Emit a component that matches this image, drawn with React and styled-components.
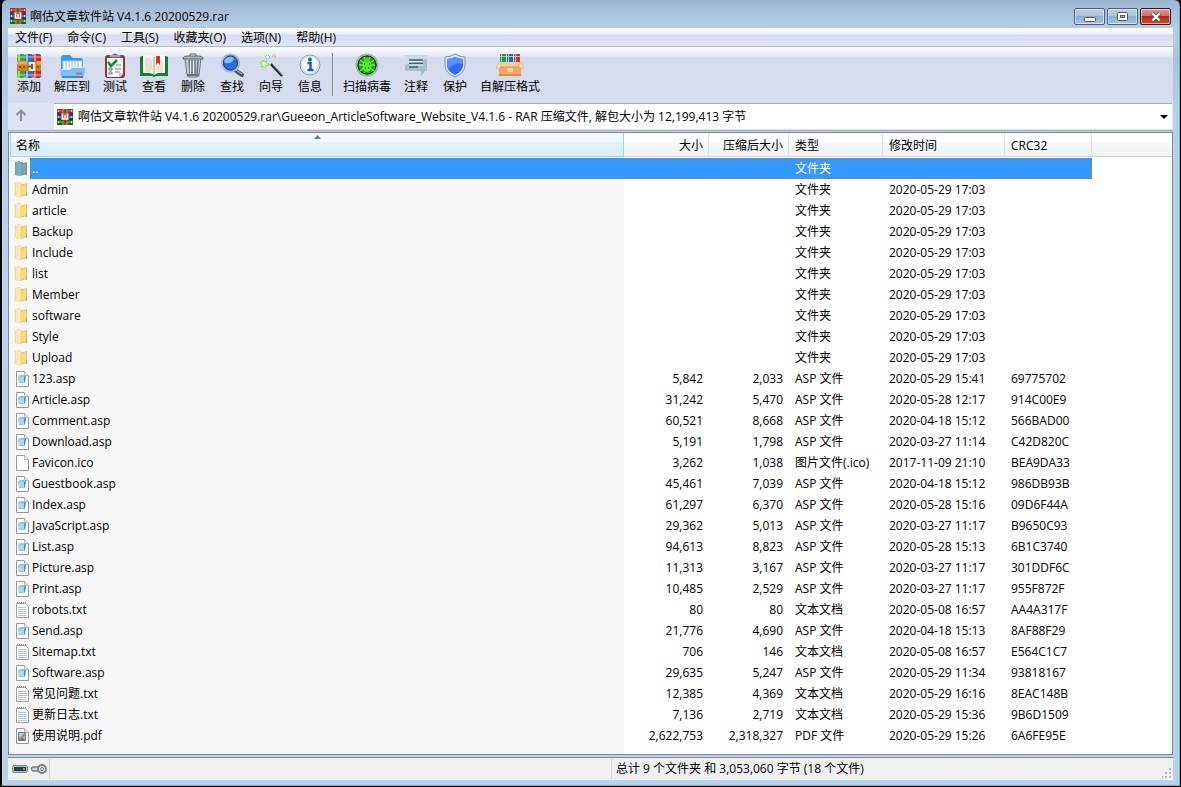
import styled, { createGlobalStyle, css } from "styled-components";

const GlobalStyle = createGlobalStyle`
  *, *::before, *::after {
    box-sizing: border-box;
  }
  body {
    margin: 0;
    background: #000;
  }
  body, button, select {
    font-family: "Open Sans", "Noto Sans CJK SC", sans-serif;
    font-size: 12px;
    line-height: 16px;
    color: #000;
  }
  button, select {
    border: 0;
    margin: 0;
    padding: 0;
    background: none;
  }
  svg {
    display: block;
    flex: none;
  }
`;

const Window = styled.div`
  display: flex;
  flex-direction: column;
  min-height: 100vh;
  padding: 0 7px 6px 6px;
  border: solid #000;
  border-width: 0 1px 1px 2px;
  border-radius: 6px 6px 0 0;
  background: linear-gradient(
    #99b4d1 0,
    #a9c1dc 12px,
    #b7cde6 28px,
    #a8c2e0 60px,
    #b9d1ea 110px,
    #b9d1ea 100%
  );
  box-shadow: inset -1px -1px 0 #45bfd6;
`;

const TitleBar = styled.header`
  display: flex;
  align-items: center;
  gap: 4px;
  height: 28px;
  padding: 4px 2px 0 2px;
`;
const Title = styled.h1`
  flex: 1;
  margin: 0;
  padding-top: 2px;
  font-size: 12px;
  font-weight: 400;
`;
const WindowButtons = styled.div`
  display: flex;
  align-self: flex-start;
  gap: 2px;
  margin-top: 4px;
`;
const WindowButton = styled.button`
  display: grid;
  place-items: center;
  width: 31px;
  height: 17px;
  border: 1px solid ${(p) => (p.$close ? "#43141b" : "#49607c")};
  border-radius: 2px;
  box-shadow: inset 0 0 0 1px rgba(255, 255, 255, 0.5);
  background: ${(p) =>
    p.$close
      ? "linear-gradient(#dd9b92 0, #ce6f63 45%, #b3261b 50%, #c9503c 100%)"
      : "linear-gradient(#b9cfe7 0, #a9c3df 45%, #8fadcd 50%, #a9c4e2 100%)"};
`;

const MenuBar = styled.nav`
  display: flex;
  gap: 1px;
  height: 19px;
  border-bottom: 1px solid #b4b8c8;
  background: linear-gradient(#fff 0, #eceff8 6px, #d6dcee 7px, #e0e6f5 100%);
`;
const MenuItem = styled.button`
  padding: 2px 7px 0;
  white-space: nowrap;
`;

const Toolbar = styled.div`
  display: flex;
  gap: 1px;
  height: 56px;
  padding: 6px 2px 0;
  background: linear-gradient(#fff 0, #e6e9f5 9px, #d6dbee 10px, #d6dbee 100%);
`;
const ToolButton = styled.button`
  display: flex;
  flex-direction: column;
  align-items: center;
  min-width: 38px;
  height: 42px;
  padding: 0 5px;
  white-space: nowrap;
`;
const Separator = styled.div`
  width: 2px;
  height: 43px;
  margin: 0 3px 0 2px;
  border-left: 1px solid #7c8190;
  border-right: 1px solid #e8ebf6;
`;

const AddressBar = styled.div`
  display: flex;
  height: 28px;
  padding-right: 1px;
  border-bottom: 1px solid #a8acb8;
  background: #dfe3f3;
`;
const UpButton = styled.button`
  display: grid;
  place-items: center;
  width: 26px;
  height: 24px;
`;
const AddressField = styled.div`
  display: flex;
  align-items: center;
  flex: 1;
  gap: 5px;
  height: 26px;
  margin-left: 20px;
  padding: 0 4px 0 3px;
  border-top: 1px solid #a9adb9;
  background: #fff;
`;
const AddressSelect = styled.select`
  flex: 1;
  min-width: 0;
  appearance: none;
  outline: 0;
`;

const ListPanel = styled.main`
  flex: 1;
  margin-top: 1px;
  padding-left: 1px;
  border: 1px solid #828790;
  overflow-x: auto;
  background: linear-gradient(to right, #f7f7f7 615px, #fff 615px);
`;
const FileTable = styled.table`
  width: 100%;
  table-layout: fixed;
  border-collapse: separate;
  border-spacing: 0;
`;
const Col = styled.col`
  width: ${(p) => p.$width};
`;
const HeadCell = styled.th`
  height: 24px;
  padding: 2px 5px 0 6px;
  border-right: 1px solid #e0e1e3;
  border-bottom: 1px solid #d5d5d5;
  background: linear-gradient(#fff 0, #fff 40%, #f7f8fa 42%, #f1f2f4 100%);
  font-weight: 400;
  text-align: ${(p) => (p.$right ? "right" : "left")};
  white-space: nowrap;
  ${(p) =>
    p.$sorted &&
    css`
      position: relative;
      border: 1px solid #96d9f9;
      border-top: 0;
      padding-left: 5px;
      background: linear-gradient(#f6f8fe 0, #f4f8fd 40%, #dff1f8 42%, #d8eef8 100%);
    `}
  &:last-child {
    border-right: 0;
  }
`;
const SortMark = styled.svg`
  position: absolute;
  top: 2px;
  left: calc(50% - 3px);
`;
const Spacer = styled.tr`
  height: 1px;
  background: #fff;
`;
const Cell = styled.td`
  height: 21px;
  padding: 0 6px;
  text-align: ${(p) => (p.$right ? "right" : "left")};
  white-space: nowrap;
`;
const NameCell = styled.td`
  height: 21px;
  padding: 0 0 0 4px;
`;
const NameLine = styled.div`
  display: flex;
  align-items: center;
`;
const NameLabel = styled.span`
  flex: 1;
  height: 21px;
  padding: 3px 2px 2px;
`;

const dotsX = "repeating-linear-gradient(90deg, #b8763a 0 1px, #3399ff 1px 2px)";
const dotsY = "repeating-linear-gradient(#b8763a 0 1px, #3399ff 1px 2px)";
const dotsTopBottom = `${dotsX} top / 100% 1px no-repeat, ${dotsX} bottom / 100% 1px no-repeat`;

const FileRow = styled.tr`
  ${(p) =>
    p.$selected &&
    css`
      color: #fff;
      ${Cell}:not(:last-child) {
        background: ${dotsTopBottom}, #3399ff;
      }
      ${NameLabel} {
        background: ${dotsTopBottom}, ${dotsY} left / 1px 100% no-repeat, #3399ff;
      }
      ${Cell}:nth-child(6) {
        background: ${dotsTopBottom}, ${dotsY} right / 1px 100% no-repeat, #3399ff;
      }
    `}
`;

const StatusBar = styled.footer`
  display: flex;
  align-items: center;
  height: 23px;
  margin-top: 2px;
  border-top: 1px solid #828790;
  border-bottom: 1px solid #fff;
  background: #f0f0f0;
`;
const StatusPane = styled.div`
  display: flex;
  align-items: center;
  justify-content: space-between;
  gap: 2px;
  height: 20px;
  padding: ${(p) => (p.$grow ? "0 0 0 4px" : "0 2px 0 4px")};
  border-right: ${(p) => (p.$divided ? "1px solid #d3d3d3" : "0")};
  flex: ${(p) => (p.$grow ? "1 1 0" : "none")};
`;

function BooksIcon({ size }) {
  return (
    <svg width={size} height={size} viewBox="0 0 16 16" aria-hidden="true">
      <rect width="16" height="5" fill="#a8233a" />
      <rect y="1" width="16" height="2" fill="#d8405a" />
      <rect y="5" width="16" height="6" fill="#24439c" />
      <rect y="7" width="16" height="2" fill="#4775d4" />
      <rect y="11" width="16" height="5" fill="#156428" />
      <rect y="12" width="16" height="2" fill="#36a04a" />
      <path d="M0 5h16M0 10.500h16" stroke="#1f1d38" strokeWidth="0.600" />
      <path d="M1 2h1M1 8h1M1 13h1M14 2h1M14 8h1M14 13h1" stroke="#e8cf70" strokeWidth="2" />
      <rect x="5" width="6" height="16" fill="#7d4a2c" />
      <path d="M6 0v4M10 0v4M6 12v4M10 12v4" stroke="#d0944a" />
      <rect x="4" y="4" width="8" height="7" fill="#b06a48" />
      <path d="M5.500 4.500v5.500h5V4.500M8 6v3" fill="none" stroke="#f6f1e6" strokeWidth="1.500" />
    </svg>
  );
}

function AddIcon() {
  return (
    <svg width="28" height="26" viewBox="0 0 28 26" aria-hidden="true">
      <rect x="2" y="1" width="8" height="24" rx="2" fill="#2ca84c" />
      <path d="M4 1v24" stroke="#82df88" strokeWidth="2" />
      <rect x="10" y="1" width="8" height="24" rx="2" fill="#2b6bd5" />
      <path d="M12 1v24" stroke="#78bdf5" strokeWidth="2" />
      <rect x="18" y="1" width="8" height="24" rx="2" fill="#cf2645" />
      <path d="M20 1v24" stroke="#f27a86" strokeWidth="2" />
      <path d="M2 4h24M2 22h24" stroke="#f0cc60" strokeWidth="1" />
      <path d="M2 8h24v10H2z" fill="#d47e20" />
      <path d="M2 10h24" stroke="#f5a94a" strokeWidth="3" />
      <path d="M4 14h2M8 14h2M22 14h2" stroke="#8a4e17" strokeWidth="2" />
      <rect x="13" y="8.500" width="8" height="10" rx="1" fill="#e8e4de" stroke="#84623e" />
      <path d="M13 13.500h5M17 11v5" stroke="#8d4d1f" strokeWidth="2" />
    </svg>
  );
}

function ExtractIcon() {
  return (
    <svg width="28" height="26" viewBox="0 0 28 26" aria-hidden="true">
      <path d="M3 22V5q0-3 3-3h6l3 3h8q2 0 2 3v14z" fill="#3c98ee" />
      <path d="M5 8h19v9H5z" fill="#f5faff" stroke="#a5cef2" />
      <path d="M8 8v8M11 8v7M14 8v7M17 8v6M20 8v6" stroke="#a9bed2" />
      <path d="M2 16h10l3-2h11q1 0 1 2l-1 7q0 2-2 2H5q-2 0-2-2z" fill="#7cc0f9" />
      <path d="M3 16.500h9l3-2h11" stroke="#d2eaff" fill="none" />
      <path d="M4 24h21" stroke="#3a8ddd" strokeWidth="2" />
      <path d="M18 20.500h6" stroke="#ed6334" strokeWidth="2" />
    </svg>
  );
}

function TestIcon() {
  return (
    <svg width="28" height="26" viewBox="0 0 28 26" aria-hidden="true">
      <rect x="4.500" y="2.500" width="19" height="22" rx="2" fill="#983b3d" stroke="#7c3536" />
      <path d="M6 5h16v16l-3 3H6z" fill="#f4f4f2" />
      <path d="M22 20l-4 4v-4z" fill="#cbc8c5" />
      <path d="M8 5V2h3q3-3 6 0h3v3z" fill="#646a70" />
      <path d="M9 3h10" stroke="#dbe0e4" />
      <path d="M7 9l3 4 6-6" fill="none" stroke="#168545" strokeWidth="2.500" />
      <path d="M15 12h5M14 16h6M14 19h5" stroke="#8a9093" />
      <path d="M8 15h3v2H8zM8 19h3v2H8z" fill="none" stroke="#73797d" />
    </svg>
  );
}

function ViewIcon() {
  return (
    <svg width="28" height="26" viewBox="0 0 28 26" aria-hidden="true">
      <path d="M0 4l2-1h10l2 2 2-2h10l2 1v19H16l-2 1-2-1H0z" fill="#177c36" />
      <path d="M3 2h8q3 0 3 3v17q-2-2-5-2H3z" fill="#f7f5e9" />
      <path d="M25 2h-8q-3 0-3 3v17q2-2 5-2h6z" fill="#fffdf1" />
      <path d="M14 4v18" stroke="#a19b83" strokeWidth="1" />
      <path d="M5 6h6M5 8h7M5 10h7M5 12h7M5 14h7M5 16h7M5 18h6M16 14h7M16 16h7M16 18h7M20 8h3M20 10h3M20 12h3" stroke="#d2d0c5" />
      <path d="M16 3h4v9l-2-2-2 2z" fill="#cf3537" />
    </svg>
  );
}

function DeleteIcon() {
  return (
    <svg width="28" height="26" viewBox="0 0 28 26" aria-hidden="true">
      <path d="M6 5h16l-2 17q0 2-3 2h-6q-3 0-3-2z" fill="#cad2d9" stroke="#68747f" />
      <path d="M10 7l1 15M13 7v15M16 7v15M19 7l-1 15" stroke="#687580" strokeWidth="1.500" />
      <path d="M11.500 8v13M14.500 8v13" stroke="#f6f9fa" />
      <path d="M4 5q1-2 4-2h12q3 0 4 2v1H4z" fill="#aeb9c2" stroke="#586673" />
      <path d="M11 3V1h6v2" fill="none" stroke="#596773" />
      <path d="M8 22h12" stroke="#65717d" strokeWidth="2" />
    </svg>
  );
}

function FindIcon() {
  return (
    <svg width="28" height="26" viewBox="0 0 28 26" aria-hidden="true">
      <path d="M17 17l7 5" stroke="#50555d" strokeWidth="4" strokeLinecap="round" />
      <path d="M18 17l6 4" stroke="#c1c6cb" strokeWidth="1" />
      <circle cx="12.500" cy="10" r="8.500" fill="#1658c8" stroke="#a5b5cc" strokeWidth="2" />
      <circle cx="12.500" cy="10" r="7" fill="#2b70d9" stroke="#174ba6" />
      <ellipse cx="11" cy="7" rx="5" ry="3" fill="#86baf5" transform="rotate(-20 11 7)" />
    </svg>
  );
}

function WizardIcon() {
  return (
    <svg width="28" height="26" viewBox="0 0 28 26" aria-hidden="true">
      <path d="M12 9l13 14" stroke="#22242a" strokeWidth="2.500" />
      <path d="M11.500 8.500l2.500 2.500" stroke="#e4e6ea" strokeWidth="2.500" />
      <path d="M16 12l9 10" stroke="#8a8e98" strokeWidth="0.700" />
      <path
        d="M6 7l1.500 2L10 8l-.5 2.500L12 12l-3 .5L8.500 15 7 13.500 4 14l1-2.500L3 9.500l2.500-.5z"
        fill="#e4fbc0"
        stroke="#8fdc4e"
      />
      <circle cx="10.500" cy="4" r="2" fill="#eafcff" stroke="#63c6f0" strokeDasharray="2 1" />
      <circle cx="17" cy="3" r="1.500" fill="#ffe4da" stroke="#f38b75" strokeDasharray="2 1" />
    </svg>
  );
}

function InfoIcon() {
  return (
    <svg width="28" height="26" viewBox="0 0 28 26" aria-hidden="true">
      <circle cx="14" cy="12" r="10" fill="#edf4ff" stroke="#8b98b1" />
      <circle cx="14" cy="12" r="8.500" fill="#f8fbff" stroke="#c6d5ec" />
      <circle cx="14" cy="6.500" r="2" fill="#2356bd" />
      <path d="M11.500 10H14.500v7M11.500 17h6" fill="none" stroke="#2356bd" strokeWidth="2.500" />
    </svg>
  );
}

function VirusIcon() {
  return (
    <svg width="28" height="26" viewBox="0 0 28 26" aria-hidden="true">
      <circle cx="14" cy="12" r="10.500" fill="#173e1b" stroke="#a7b0ab" strokeWidth="2" />
      <circle cx="14" cy="12" r="9" fill="#12a81a" stroke="#083910" />
      <path d="M7 7l4 3M6 12h4M7 18l4-3M21 7l-4 3M22 12h-4M21 18l-4-3M11 4l2 4M17 4l-2 4" stroke="#5cf23c" strokeWidth="1.500" />
      <ellipse cx="14" cy="13" rx="4.500" ry="6" fill="#58ee25" />
      <circle cx="14" cy="7" r="2.500" fill="#3cd522" />
      <path d="M11 11h1M16 11h1M12 15h1M15 15h1" stroke="#117a12" strokeWidth="1.500" />
    </svg>
  );
}

function CommentIcon() {
  return (
    <svg width="28" height="26" viewBox="0 0 28 26" aria-hidden="true">
      <path d="M5 2h18q2 0 2 2v14h-2l-4 5v-5H5q-2 0-2-2V4q0-2 2-2z" fill="#a8bccf" />
      <path d="M5 2h18q2 0 2 2v2L3 12V4q0-2 2-2z" fill="#ccdbe7" />
      <path d="M7 7h14M7 10.500h14M7 14h9" stroke="#46596b" strokeWidth="1.500" />
      <path d="M7 8.500h14M7 12h14" stroke="#f5faff" />
    </svg>
  );
}

function ShieldIcon() {
  return (
    <svg width="28" height="26" viewBox="0 0 28 26" aria-hidden="true">
      <path d="M14 1q5 3 10 3v8q0 8-10 12Q4 20 4 12V4q5 0 10-3z" fill="#d9e1ec" stroke="#8997aa" />
      <path d="M14 4q4 2 8 2v6q0 6-8 10Q6 18 6 12V6q4 0 8-2z" fill="#316cf0" />
      <path d="M14 4q4 2 8 2v5q-8-3-14 5-2-2-2-4V6q4 0 8-2z" fill="#5a91ff" />
    </svg>
  );
}

function SfxIcon() {
  return (
    <svg width="28" height="26" viewBox="0 0 28 26" aria-hidden="true">
      <path d="M4 1h6v10H4z" fill="#219b43" />
      <path d="M11 1h6v10h-6z" fill="#2864c9" />
      <path d="M18 1h6v10h-6z" fill="#cc3046" />
      <path d="M5.500 1v8M12.500 1v8M19.500 1v8" stroke="#91d6dd" />
      <path d="M4 3.500h6M11 3.500h6M18 3.500h6" stroke="#edc45b" />
      <path d="M3 9h22v14H3z" fill="#f1a66b" />
      <path d="M4 9h20v5H4z" fill="#f6cf96" />
      <path d="M3 9h1l2 5-2 1H0zM25 9h-1l-2 5 2 1h4z" fill="#fbe2b4" stroke="#d99b5b" strokeWidth="0.500" />
      <path d="M4 14h20" stroke="#e0955a" />
      <path d="M11 15h6v4h-6z" fill="#ffd39c" />
      <path d="M3 22h22" stroke="#e98855" strokeWidth="2" />
    </svg>
  );
}

const FolderIcon = ({ selected }) => (
  <svg width="16" height="18" viewBox="0 0 16 18" aria-hidden="true">
    <path d="M1 2l5-1v15l-5-1z" fill={selected ? "#679fb5" : "#ecd67c"} />
    <path d="M2 2h7v13H2z" fill={selected ? "#78acbc" : "#f7eaae"} />
    <path d="M6 4l7-2v12l-7 2z" fill={selected ? "#5c94ae" : "#e0c466"} />
    <path d="M7 5l5-2v10l-5 2z" fill={selected ? "#78a7b8" : "#f2dc88"} />
    <path d="M6 4v12" stroke={selected ? "#9dc4cb" : "#fff3c4"} />
    <path d="M12.500 11v4" stroke={selected ? "#3f96d8" : "#7ab6d5"} />
  </svg>
);

const Page = () => (
  <>
    <path d="M2.500 1.500h8l4 4v11h-12z" fill="#fff" stroke="#989898" />
    <path d="M10.500 1.500v4h4" fill="#ececec" stroke="#b4b4b4" />
  </>
);

function FileIcon({ kind }) {
  return (
    <svg width="16" height="18" viewBox="0 0 16 18" aria-hidden="true">
      {kind !== "txt" && <Page />}
      {kind === "asp" && (
        <>
          <path d="M4 7l2-2h6l-1 7-2 1H5z" fill="#8fc6dc" />
          <path d="M5 7h5v5H5z" fill="#a9d8e8" />
          <path d="M10 7l2-2-1 7-1 1z" fill="#4a8fb2" />
        </>
      )}
      {kind === "txt" && (
        <>
          <path d="M2.500 2.500h9l3 3v11h-12z" fill="#fff" stroke="#a0a0a0" />
          <path d="M4 6.500h8M4 8.500h9M4 10.500h9M4 12.500h9M4 14.500h9" stroke="#b4c8dc" />
          <path d="M3.500 1v2M5.500 1v2M7.500 1v2M9.500 1v2M11.500 1v2" stroke="#9a9a9a" />
        </>
      )}
      {kind === "pdf" && (
        <>
          <path d="M4.500 5.500h7v8h-7z" fill="#a6d4ed" stroke="#4b83ae" />
          <path d="M5 11l3-1 3 3H5z" fill="#3673a5" />
          <path d="M5 13l7-7" stroke="#e07b29" strokeWidth="2" />
        </>
      )}
    </svg>
  );
}

const menus = ["文件(F)", "命令(C)", "工具(S)", "收藏夹(O)", "选项(N)", "帮助(H)"];

const tools = [
  ["添加", AddIcon],
  ["解压到", ExtractIcon],
  ["测试", TestIcon],
  ["查看", ViewIcon],
  ["删除", DeleteIcon],
  ["查找", FindIcon],
  ["向导", WizardIcon],
  ["信息", InfoIcon],
];
const extraTools = [
  ["扫描病毒", VirusIcon],
  ["注释", CommentIcon],
  ["保护", ShieldIcon],
  ["自解压格式", SfxIcon],
];

const folders = ["Admin", "article", "Backup", "Include", "list", "Member", "software", "Style", "Upload"];

const files = [
  ["123.asp", "5,842", "2,033", "2020-05-29 15:41", "69775702"],
  ["Article.asp", "31,242", "5,470", "2020-05-28 12:17", "914C00E9"],
  ["Comment.asp", "60,521", "8,668", "2020-04-18 15:12", "566BAD00"],
  ["Download.asp", "5,191", "1,798", "2020-03-27 11:14", "C42D820C"],
  ["Favicon.ico", "3,262", "1,038", "2017-11-09 21:10", "BEA9DA33"],
  ["Guestbook.asp", "45,461", "7,039", "2020-04-18 15:12", "986DB93B"],
  ["Index.asp", "61,297", "6,370", "2020-05-28 15:16", "09D6F44A"],
  ["JavaScript.asp", "29,362", "5,013", "2020-03-27 11:17", "B9650C93"],
  ["List.asp", "94,613", "8,823", "2020-05-28 15:13", "6B1C3740"],
  ["Picture.asp", "11,313", "3,167", "2020-03-27 11:17", "301DDF6C"],
  ["Print.asp", "10,485", "2,529", "2020-03-27 11:17", "955F872F"],
  ["robots.txt", "80", "80", "2020-05-08 16:57", "AA4A317F"],
  ["Send.asp", "21,776", "4,690", "2020-04-18 15:13", "8AF88F29"],
  ["Sitemap.txt", "706", "146", "2020-05-08 16:57", "E564C1C7"],
  ["Software.asp", "29,635", "5,247", "2020-05-29 11:34", "93818167"],
  ["常见问题.txt", "12,385", "4,369", "2020-05-29 16:16", "8EAC148B"],
  ["更新日志.txt", "7,136", "2,719", "2020-05-29 15:36", "9B6D1509"],
  ["使用说明.pdf", "2,622,753", "2,318,327", "2020-05-29 15:26", "6A6FE95E"],
];

const typeNames = {
  asp: "ASP 文件",
  ico: "图片文件(.ico)",
  txt: "文本文档",
  pdf: "PDF 文件",
};

const rows = [
  { name: "..", kind: "folder", type: "文件夹", selected: true },
  ...folders.map((name) => ({ name, kind: "folder", type: "文件夹", date: "2020-05-29 17:03" })),
  ...files.map(([name, size, packed, date, crc]) => {
    const kind = name.split(".").pop();
    return { name, kind, size, packed, type: typeNames[kind], date, crc };
  }),
];

const archive = "啊估文章软件站 V4.1.6 20200529.rar";

function Tool({ label, icon: Icon }) {
  return (
    <ToolButton type="button">
      <Icon />
      {label}
    </ToolButton>
  );
}

function Row({ file }) {
  return (
    <FileRow $selected={file.selected}>
      <NameCell>
        <NameLine>
          {file.kind === "folder" ? <FolderIcon selected={file.selected} /> : <FileIcon kind={file.kind} />}
          <NameLabel>{file.name}</NameLabel>
        </NameLine>
      </NameCell>
      <Cell $right>{file.size}</Cell>
      <Cell $right>{file.packed}</Cell>
      <Cell>{file.type}</Cell>
      <Cell>{file.date}</Cell>
      <Cell>{file.crc}</Cell>
      <Cell />
    </FileRow>
  );
}

export default function App() {
  return (
    <>
      <GlobalStyle />
      <Window>
        <TitleBar>
          <BooksIcon size={16} />
          <Title>{archive}</Title>
          <WindowButtons>
            <WindowButton type="button" aria-label="最小化">
              <svg width="12" height="11" viewBox="0 0 12 11">
                <rect x="0.500" y="6.500" width="11" height="4" rx="1" fill="#fff" stroke="#535b66" />
              </svg>
            </WindowButton>
            <WindowButton type="button" aria-label="最大化">
              <svg width="11" height="9" viewBox="0 0 11 9">
                <rect x="0.500" y="0.500" width="10" height="8" rx="1" fill="#fff" stroke="#535b66" />
                <rect x="3.500" y="3.500" width="4" height="2" fill="#8fadcd" stroke="#535b66" />
              </svg>
            </WindowButton>
            <WindowButton type="button" aria-label="关闭" $close>
              <svg width="12" height="10" viewBox="0 0 12 10">
                <path d="M2.500 1.500l7 7M9.500 1.500l-7 7" stroke="#535b66" strokeWidth="4" />
                <path d="M2.500 1.500l7 7M9.500 1.500l-7 7" stroke="#fff" strokeWidth="2.200" />
              </svg>
            </WindowButton>
          </WindowButtons>
        </TitleBar>

        <MenuBar>
          {menus.map((label) => (
            <MenuItem type="button" key={label}>
              {label}
            </MenuItem>
          ))}
        </MenuBar>

        <Toolbar>
          {tools.map(([label, icon]) => (
            <Tool key={label} label={label} icon={icon} />
          ))}
          <Separator />
          {extraTools.map(([label, icon]) => (
            <Tool key={label} label={label} icon={icon} />
          ))}
        </Toolbar>

        <AddressBar>
          <UpButton type="button" aria-label="向上">
            <svg width="12" height="12" viewBox="0 0 12 12">
              <path d="M6 12V2M1.500 6L6 1.500 10.500 6" fill="none" stroke="#8d9195" strokeWidth="2" />
            </svg>
          </UpButton>
          <AddressField>
            <BooksIcon size={16} />
            <AddressSelect aria-label="地址">
              <option>
                {archive}\Gueeon_ArticleSoftware_Website_V4.1.6 - RAR 压缩文件, 解包大小为 12,199,413 字节
              </option>
            </AddressSelect>
            <svg width="8" height="4" viewBox="0 0 8 4" aria-hidden="true">
              <path d="M0 0h8L4 4z" />
            </svg>
          </AddressField>
        </AddressBar>

        <ListPanel>
          <FileTable>
            <colgroup>
              <Col $width="614px" />
              <Col $width="85px" />
              <Col $width="80px" />
              <Col $width="94px" />
              <Col $width="122px" />
              <Col $width="87px" />
              <Col $width="auto" />
            </colgroup>
            <thead>
              <tr>
                <HeadCell $sorted>
                  名称
                  <SortMark width="7" height="4" viewBox="0 0 7 4" aria-hidden="true">
                    <path d="M0 4l3.500-4L7 4z" fill="#4b86a3" />
                  </SortMark>
                </HeadCell>
                <HeadCell $right>大小</HeadCell>
                <HeadCell $right>压缩后大小</HeadCell>
                <HeadCell>类型</HeadCell>
                <HeadCell>修改时间</HeadCell>
                <HeadCell>CRC32</HeadCell>
                <HeadCell />
              </tr>
              <Spacer />
            </thead>
            <tbody>
              {rows.map((file) => (
                <Row key={file.name} file={file} />
              ))}
            </tbody>
          </FileTable>
        </ListPanel>

        <StatusBar>
          <StatusPane $divided>
            <svg width="16" height="10" viewBox="0 0 16 10" aria-hidden="true">
              <rect x="0.500" y="1.500" width="15" height="7" rx="2" fill="#a9bdcc" stroke="#718796" />
              <rect x="2" y="3" width="12" height="4" fill="#303b45" />
              <path d="M11 5h2" stroke="#d9e5ed" />
            </svg>
            <svg width="17" height="12" viewBox="0 0 17 12" aria-hidden="true">
              <path d="M1 6l2-2h6M1 6l2 2h6" fill="none" stroke="#73787d" strokeWidth="1.500" />
              <path d="M3 6h6" stroke="#d5d8da" strokeWidth="2" />
              <circle cx="12" cy="6" r="4" fill="#f0f0f0" stroke="#7c8389" strokeWidth="2" />
              <circle cx="12" cy="6" r="1.500" fill="#fff" stroke="#6c7379" />
            </svg>
          </StatusPane>
          <StatusPane $divided $grow />
          <StatusPane $grow>
            总计 9 个文件夹 和 3,053,060 字节 (18 个文件)
            <svg width="11" height="20" viewBox="0 0 11 20" aria-hidden="true">
              <path d="M7 9h2v2H7zM7 13h2v2H7zM3 13h2v2H3zM7 17h2v2H7zM3 17h2v2H3zM-1 17h2v2h-2z" fill="#bdbdbd" />
            </svg>
          </StatusPane>
        </StatusBar>
      </Window>
    </>
  );
}
